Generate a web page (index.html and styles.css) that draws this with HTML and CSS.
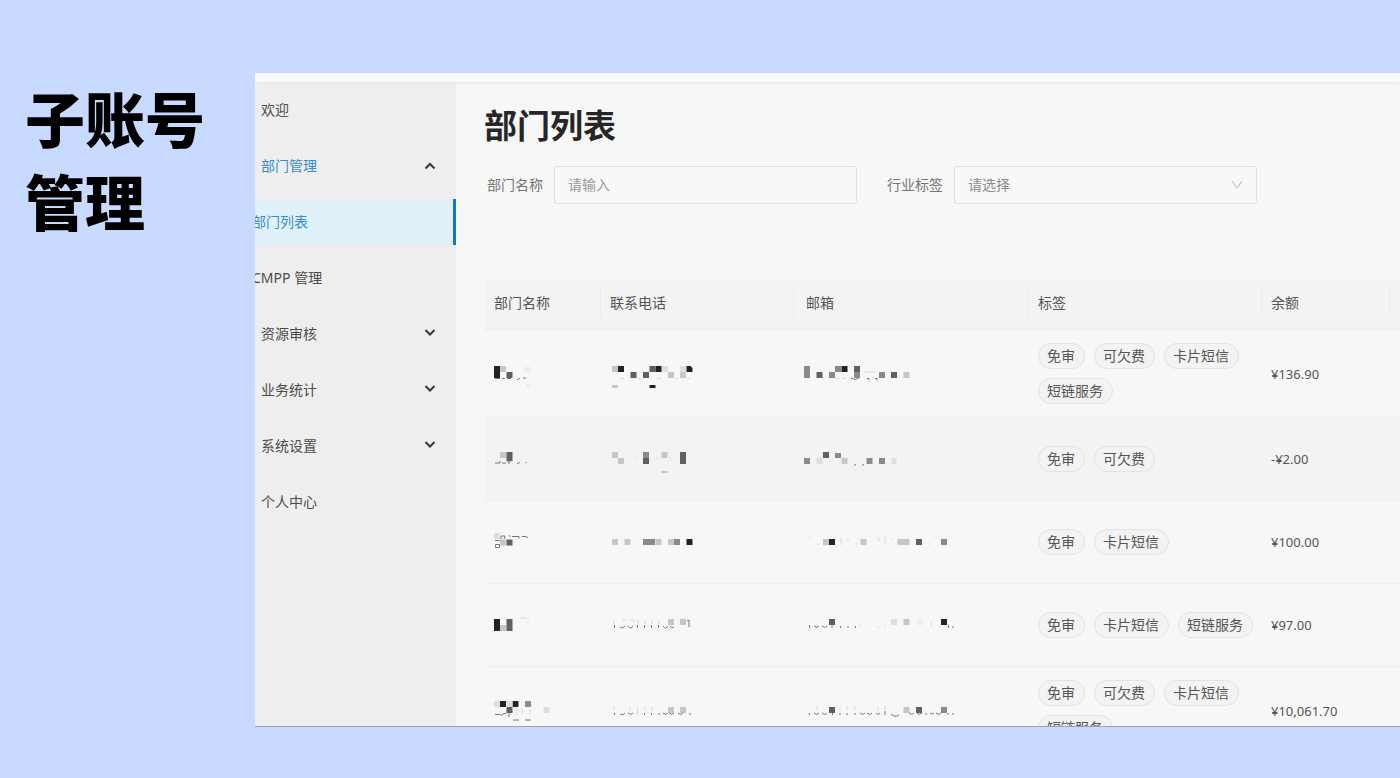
FILE: index.html
```html
<!DOCTYPE html>
<html lang="zh-CN">
<head>
<meta charset="utf-8">
<title>子账号管理</title>
<link rel="stylesheet" href="styles.css">
</head>
<body>
<header class="caption"><h1 class="caption-title">子账号管理</h1></header>
<div class="window">
  <div class="topbar"></div>
  <div class="layout">
    <nav class="sidebar">
      <a class="item" href="#">欢迎</a>
      <a class="item item-open" href="#">部门管理
        <svg class="arrow" viewBox="0 0 12 8"><path d="M1.500 6.500L6 2l4.500 4.500"/></svg></a>
      <a class="item item-sub item-active" href="#">部门列表</a>
      <a class="item item-sub" href="#">CMPP 管理</a>
      <a class="item" href="#">资源审核
        <svg class="arrow" viewBox="0 0 12 8"><path d="M1.500 0L6 4.500L10.500 0"/></svg></a>
      <a class="item" href="#">业务统计
        <svg class="arrow" viewBox="0 0 12 8"><path d="M1.500 0L6 4.500L10.500 0"/></svg></a>
      <a class="item" href="#">系统设置
        <svg class="arrow" viewBox="0 0 12 8"><path d="M1.500 0L6 4.500L10.500 0"/></svg></a>
      <a class="item" href="#">个人中心</a>
    </nav>
    <main class="main">
      <h2 class="title">部门列表</h2>
      <form class="filters">
        <div class="field">
          <label for="dept">部门名称</label>
          <input class="control" id="dept" type="text" placeholder="请输入">
        </div>
        <div class="field">
          <label for="industry">行业标签</label>
          <div class="select-box">
            <select class="control" id="industry"><option>请选择</option></select>
            <svg class="select-arrow" viewBox="0 0 12 9"><path d="M1 1l5 7 5-7"/></svg>
          </div>
        </div>
      </form>
      <table class="table">
        <colgroup><col class="c-name"><col class="c-phone"><col class="c-mail"><col class="c-tags"><col class="c-balance"><col></colgroup>
        <thead>
          <tr><th><span>部门名称</span></th><th><span>联系电话</span></th><th><span class="mail-head">邮箱</span></th><th><span>标签</span></th><th><span>余额</span></th><th></th></tr>
        </thead>
        <tbody>
          <tr>
            <td><svg class="mosaic mosaic-s" viewBox="0 0 60 28"><path class="k0" d="M0 6h6v12h-6z"/><path class="k3" d="M6 6h6v6h-6z"/><path class="k1" d="M12.500 12h6v6h-6z"/><path class="k5" d="M30 7h7v5h-7zM32 24h5v3h-5z"/><path class="ink" d="M1 18.500h5m2 0h3m2 0h4M23 19.500q2 0 3-1.500M29 18h3"/></svg></td>
            <td><svg class="mosaic mosaic-m" viewBox="0 0 90 28"><path class="k0" d="M8 6h6v6h-6zM45.500 6h6v6h-6zM76.500 6h4l2 2v4h-6zM39.500 25h6v3h-6z"/><path class="k1" d="M20.500 12h6v6h-6zM33 12h6v6h-6zM39.500 6h6v6h-6z"/><path class="k3" d="M2 6h6v6h-6zM2 25h6v3h-6zM58 12h6v6h-6zM70 12h6v6h-6z"/><path class="k4" d="M52 6h6v6h-6zM70 6h6v6h-6z"/><path class="ink faint" d="M10 18.500h4M28 18.500h3M47 18.500h4M65 18.500h3M77 18.500h3"/></svg></td>
            <td><svg class="mosaic mosaic-l" viewBox="0 0 154 28"><path class="k0" d="M38.500 6h6v6h-6z"/><path class="k1" d="M13.500 12h6v6h-6zM51 6h6v6h-6zM88 12h6v6h-6z"/><path class="k2" d="M1 6h6v12h-6zM26 12h6v6h-6zM32 6h6v6h-6zM51 12h6v6h-6zM76 12h6v6h-6z"/><path class="k3" d="M100.500 12h6v6h-6z"/><path class="ink faint" d="M32 18.500h4M40 18.500h3M61 12h12"/><path class="ink" d="M48 18q4 3 8 0M64 18.500h2v2M72 18.500h2v2"/></svg></td>
            <td><div class="tags"><span class="tag">免审</span><span class="tag">可欠费</span><span class="tag">卡片短信</span><span class="tag">短链服务</span></div></td>
            <td>¥136.90</td><td></td>
          </tr>
          <tr class="row-hover">
            <td><svg class="mosaic mosaic-s" viewBox="0 0 60 28"><path class="k1" d="M12.500 7h6v9h-6z"/><path class="k3" d="M6 7h6v6h-6z"/><path class="ink" d="M1 18h5v-2M8 18h4m1-2h4M15 16v3M23 18.500q2 0 3-1.500M32 17v1"/></svg></td>
            <td><svg class="mosaic mosaic-m" viewBox="0 0 90 28"><path class="k1" d="M33 13h6v6h-6zM70 7h6v12h-6z"/><path class="k2" d="M33 7h6v6h-6z"/><path class="k3" d="M2 7h6v6h-6zM8 13h6v6h-6zM51.500 7h6v6h-6zM51.500 26h6v2h-6z"/><path class="ink faint" d="M27 12v2M46 13h2M60 12v2"/></svg></td>
            <td><svg class="mosaic mosaic-l" viewBox="0 0 154 28"><path class="k1" d="M20 7h6v6h-6z"/><path class="k2" d="M1 13h6v6h-6zM32 8h6v5h-6zM63.500 13h6v6h-6zM76 13h6v6h-6z"/><path class="k3" d="M38.500 13h6v6h-6z"/><path class="k4" d="M13.500 13h6v6h-6zM88.500 13h5v6h-5z"/><path class="ink" d="M52 19v2M60 19v2"/></svg></td>
            <td><div class="tags"><span class="tag">免审</span><span class="tag">可欠费</span></div></td>
            <td>-¥2.00</td><td></td>
          </tr>
          <tr>
            <td><svg class="mosaic mosaic-s" viewBox="0 0 60 28"><path class="k1" d="M12.500 11.500h6v6h-6z"/><path class="k3" d="M6 11.500h6v6h-6z"/><path class="k4" d="M0 5h6v6h-6z"/><path class="ink" d="M1 12.500h5M1.500 16.500h4v3h-4zM7 11V8h4l-1 3M14.500 7l2 2M18 8.500h7v2M28 8.500h4l2 1.500"/></svg></td>
            <td><svg class="mosaic mosaic-m" viewBox="0 0 90 28"><path class="k0" d="M76.500 11h6v6h-6z"/><path class="k2" d="M33 11h12v6h-12zM64 11h6v6h-6z"/><path class="k3" d="M2 11h6v6h-6zM14.500 11h6v6h-6zM45.500 11h6v6h-6zM58 11h6v6h-6z"/></svg></td>
            <td><svg class="mosaic mosaic-l" viewBox="0 0 154 28"><path class="k0" d="M26 11h6v6h-6z"/><path class="k1" d="M113 11h6v6h-6z"/><path class="k2" d="M138 11h6v6h-6z"/><path class="k3" d="M20 11h6v6h-6zM57.500 11h6v6h-6zM94.500 11h12v6h-12z"/><path class="ink faint" d="M7 9v2M14 16h2M38 10v7M45 10v3M53 16h2M76 9v4M82 9v8M89 10v2M125 16h2"/></svg></td>
            <td><div class="tags"><span class="tag">免审</span><span class="tag">卡片短信</span></div></td>
            <td>¥100.00</td><td></td>
          </tr>
          <tr>
            <td><svg class="mosaic mosaic-s" viewBox="0 0 60 28"><path class="k0" d="M0 8h6v12h-6z"/><path class="k1" d="M12.500 8h6v12h-6z"/><path class="k3" d="M6 14h6v6h-6z"/><path class="ink faint" d="M26 7h7M34 10v2"/></svg></td>
            <td><svg class="mosaic mosaic-m" viewBox="0 0 90 28"><path class="k3" d="M58 8h6v6h-6zM70 8h6v6h-6z"/><path class="ink faint" d="M4 9v4M12 9h3M20 9q3-1 5 2M28 9v4M35 9v4M42 9v4M49 9v4"/><path class="ink" d="M4.500 14v3M10 16q3 2 5-1M18 15q3 4 5 0M27.500 14v3M34.500 14v3M41.500 14v3M48.500 14v3M53 15q3 4 5 0M60 15q2 3 4 1M77 10l2-1v7"/></svg></td>
            <td><svg class="mosaic mosaic-l" viewBox="0 0 154 28"><path class="k0" d="M138 8h6v6h-6z"/><path class="k1" d="M26 8h6v6h-6z"/><path class="k3" d="M100.500 8h6v6h-6z"/><path class="k4" d="M88 8h6v6h-6z"/><path class="k5" d="M114 8h6v6h-6z"/><path class="ink" d="M6.500 14v3M11 15q3 3 5 0M19 15q3 3 5 0M29 14v3M37.500 15v2M45 15v2M52.500 15v2M145.500 14v3M150 15v2"/><path class="ink faint" d="M57 14v2M75 15v2M82 14v2M128 11v4"/></svg></td>
            <td><div class="tags"><span class="tag">免审</span><span class="tag">卡片短信</span><span class="tag">短链服务</span></div></td>
            <td>¥97.00</td><td></td>
          </tr>
          <tr>
            <td><svg class="mosaic mosaic-s" viewBox="0 0 60 28"><path class="k0" d="M6 4h6v6h-6zM18.500 4h6v6h-6z"/><path class="k1" d="M12.500 10h6v6h-6z"/><path class="k2" d="M31 4h6v6h-6z"/><path class="k4" d="M0 4h6v6h-6zM12.500 4h6v6h-6zM49.500 10h6v6h-6z"/><path class="ink" d="M1 17.500h5l1 1 3-2h2M15 16v4M19 23h6M31 23h6"/><path class="ink faint" d="M21 11h2v7M28 11v6M36 12v6"/></svg></td>
            <td><svg class="mosaic mosaic-m" viewBox="0 0 90 28"><path class="k3" d="M58 10h6v6h-6zM70 10h6v6h-6z"/><path class="ink faint" d="M4 9v4M20 10v4M27.500 10v8M35 10v4M42 10v4"/><path class="ink" d="M4.500 16v2M10 17q3 2 5-1M18 16q3 3 5 0M34.500 16v2M41.500 16v2M49 16v2M53 16q3 3 5 0M59 16q3 3 5 0M68 16q3 3 5 0M80 16v2"/></svg></td>
            <td><svg class="mosaic mosaic-l" viewBox="0 0 154 28"><path class="k1" d="M26 10h6v6h-6zM113 10h6v6h-6z"/><path class="k2" d="M138 10h6v6h-6z"/><path class="k3" d="M100.500 10h6v6h-6z"/><path class="ink" d="M6.500 16v2M11 16q3 3 5 0M19 16q3 3 5 0M29.500 16v2M37 16v2M44 16v2M52 16v2M57 16q3 3 5 0M64 16q3 3 5 0M73 16q3 3 4 0M82 14v4M88 17q4 4 8 1M106 16q3 3 5 0M114 16q2 3 5 0M123 16v2M127 16q3 2 4 0M133 16q3 3 5 0M145 16v2M150 16v2"/><path class="ink faint" d="M14 9v5M37 9v4M44 9v4M52 9v4M75 10v4M82 9v4"/></svg></td>
            <td><div class="tags"><span class="tag">免审</span><span class="tag">可欠费</span><span class="tag">卡片短信</span><span class="tag">短链服务</span></div></td>
            <td>¥10,061.70</td><td></td>
          </tr>
        </tbody>
      </table>
    </main>
  </div>
</div>
</body>
</html>
```
FILE: styles.css
```css
* { box-sizing: border-box; }

body {
  margin: 0;
  height: 100vh;
  padding: 73px 0 51px;
  display: flex;
  overflow: hidden;
  background: #c8daff;
  color: #555;
  font: 14px/20px "Noto Sans", "Noto Sans CJK SC", sans-serif;
}

.caption { flex: 0 0 255px; padding: 2px 45px 0 25px; }
.caption-title {
  margin: 0;
  color: #000;
  font: 900 60px/83px "Noto Sans CJK SC", sans-serif;
}

.window {
  flex: 1;
  min-width: 0;
  display: flex;
  flex-direction: column;
  overflow: hidden;
  background: #f7f7f7;
  border-bottom: 1px solid #98a2b2;
}
.topbar { flex: 0 0 9px; background: #fafafa; box-shadow: 0 1px 3px #e4e4e4; z-index: 1; }
.layout { flex: 1; min-height: 0; display: flex; }

.sidebar {
  flex: 0 0 201px;
  display: flex;
  flex-direction: column;
  gap: 10px;
  padding-top: 5px;
  overflow: hidden;
  background: #eee;
}
.item {
  display: flex;
  align-items: center;
  justify-content: space-between;
  flex: 0 0 46px;
  padding: 0 20px 0 6px;
  color: #4c4c4c;
  text-decoration: none;
}
.item-open { color: #3a8ccb; }
.item-sub { margin-left: -9px; }
.item-active { background: #e0f1fa; color: #3a8ccb; border-right: 3px solid #1079c8; }
.arrow { width: 12px; height: 8px; overflow: visible; fill: none; stroke: #383838; stroke-width: 2; }

.main { flex: 1; min-width: 0; padding: 18px 0 0 29px; overflow: hidden; }
.title {
  margin: 0 0 0 -1px;
  color: #262626;
  font: 700 33px/48px "Noto Sans CJK SC", sans-serif;
}
.filters { display: flex; gap: 30px; padding: 18px 0 0 2px; margin-bottom: 76px; }
.field { display: flex; align-items: center; gap: 11px; color: #757575; }
.control {
  display: block;
  width: 303px;
  height: 38px;
  padding: 0 13px 1px;
  border: 1px solid #e0e0e0;
  border-radius: 3px;
  background: #f8f8f8;
  color: #8c8c8c;
  font: inherit;
  appearance: none;
}
.control::placeholder { color: #999; }
.select-box { position: relative; }
.select-arrow {
  position: absolute;
  right: 14px;
  top: 14px;
  width: 12px;
  height: 9px;
  fill: none;
  stroke: #b4b4b4;
  pointer-events: none;
}

.table { width: 100%; table-layout: fixed; border-spacing: 0; }
.c-name { width: 116px; }
.c-phone { width: 193px; }
.c-mail { width: 235px; }
.c-tags { width: 233px; }
.c-balance { width: 128px; }
.table th {
  height: 50px;
  padding: 0 0 3px;
  background: #f3f3f3;
  border-bottom: 1px solid #ededed;
  font-weight: 400;
  text-align: left;
}
.table th span { display: block; padding: 4px 9px; border-right: 1px solid #eaeaea; }
.table th .mail-head { padding-left: 12px; }
.table td {
  height: 83px;
  padding: 13px 0 13px 9px;
  border-bottom: 1px solid #eee;
  font-size: 13px;
}
.row-hover { background: #f3f3f3; }

.tags { display: flex; flex-wrap: wrap; gap: 9px; }
.tag {
  padding: 2px 9px 2px 8px;
  border: 1px solid #e2e2e2;
  border-radius: 13px;
  background: #f3f3f3;
  font-size: 14px;
}

.mosaic { display: block; height: 28px; }
.mosaic-s { width: 60px; }
.mosaic-m { width: 90px; }
.mosaic-l { width: 154px; }
.k0 { fill: #222; }
.k1 { fill: #606060; }
.k2 { fill: #8a8a8a; }
.k3 { fill: #c6c6c6; }
.k4 { fill: #dedede; }
.k5 { fill: #ececec; }
.ink { fill: none; stroke: #777; }
.faint { stroke: #d8d8d8; }
```
